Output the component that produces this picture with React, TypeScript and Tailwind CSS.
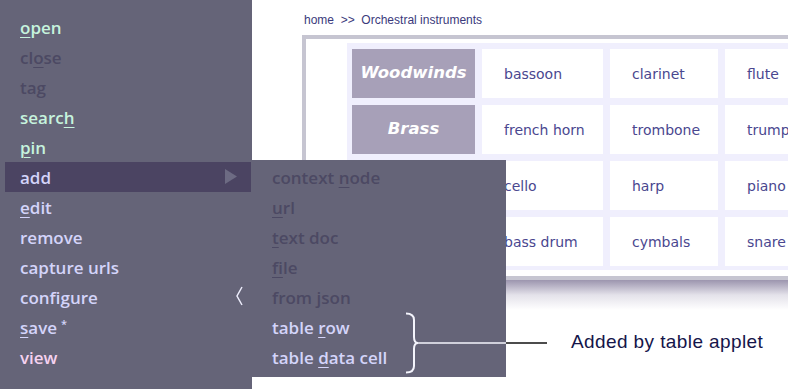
import React from "react";

type Item = { label: string; u?: number; color: string };

const MINT = "text-[#c6f3dd]";
const DIS = "text-[#4c4963]";
const LAV = "text-[#d4d4fa]";
const PINK = "text-[#f6d2f0]";

const mainItems: Item[] = [
  { label: "open", u: 0, color: MINT },
  { label: "close", u: 2, color: DIS },
  { label: "tag", color: DIS },
  { label: "search", u: 5, color: MINT },
  { label: "pin", u: 0, color: MINT },
  { label: "add", color: LAV },
  { label: "edit", u: 0, color: LAV },
  { label: "remove", color: LAV },
  { label: "capture urls", color: LAV },
  { label: "configure", color: LAV },
  { label: "save", u: 0, color: LAV },
  { label: "view", color: PINK },
];

const subItems: Item[] = [
  { label: "context node", u: 8, color: DIS },
  { label: "url", u: 0, color: DIS },
  { label: "text doc", u: 0, color: DIS },
  { label: "file", u: 0, color: DIS },
  { label: "from json", color: DIS },
  { label: "table row", u: 6, color: LAV },
  { label: "table data cell", u: 6, color: LAV },
];

function Label({ it }: { it: Item }) {
  if (it.u === undefined) return <>{it.label}</>;
  const a = it.label.slice(0, it.u);
  const b = it.label.slice(it.u, it.u + 1);
  const c = it.label.slice(it.u + 1);
  return (
    <>
      {a}
      <span className="underline underline-offset-[3px] decoration-1">{b}</span>
      {c}
    </>
  );
}

const menuFont = { fontFamily: "'Open Sans', Lato, sans-serif" };

function MainMenu() {
  return (
    <div
      className="absolute left-0 top-0 w-[252px] h-[389px] bg-[#656478] pt-[12px] flex flex-col text-[17px] font-semibold"
      style={menuFont}
    >
      {mainItems.map((it) => {
        const active = it.label === "add";
        return (
          <div
            key={it.label}
            className={`h-[30px] flex items-center relative ${active ? "bg-[#4b4462] ml-[5px] mr-[1px] pl-[15px]" : "pl-[20px]"} ${it.color}`}
          >
            <span className="leading-none">
              <Label it={it} />
              {it.label === "save" && <span className="text-[11px] align-[6px] ml-[4px]">*</span>}
            </span>
            {active && (
              <svg className="absolute left-[220px] top-[7px]" width="12" height="15" viewBox="0 0 12 15">
                <polygon points="0,0 12,7.5 0,15" fill="#6d6b83" />
              </svg>
            )}
            {it.label === "configure" && (
              <svg className="absolute left-[235px] top-[4px]" width="10" height="20" viewBox="0 0 10 20">
                <polyline points="7,1 2,10 7,19" fill="none" stroke="#ececfb" strokeWidth="1.5" />
              </svg>
            )}
          </div>
        );
      })}
    </div>
  );
}

function SubMenu() {
  return (
    <div
      className="absolute left-[252px] top-[160px] w-[254px] h-[217px] bg-[#656478] pt-[2px] flex flex-col text-[17px] font-semibold"
      style={menuFont}
    >
      {subItems.map((it) => (
        <div key={it.label} className={`h-[30px] flex items-center pl-[20px] ${it.color}`}>
          <span className="leading-none">
            <Label it={it} />
          </span>
        </div>
      ))}
    </div>
  );
}

const rows = [
  ["Woodwinds", "bassoon", "clarinet", "flute"],
  ["Brass", "french horn", "trombone", "trumpet"],
  ["Strings", "cello", "harp", "piano"],
  ["Percussion", "bass drum", "cymbals", "snare drum"],
];

function Content() {
  return (
    <div className="pl-[302px] pt-[13px] w-[900px]" style={{ fontFamily: "'DejaVu Sans', Verdana, sans-serif" }}>
      <div className="h-[15px] pl-[2px] text-[12px] leading-[15px] text-[#3b3a7c]" style={{ fontFamily: "'Liberation Sans', Arial, sans-serif" }}>
        home&nbsp;&nbsp;&gt;&gt;&nbsp; Orchestral instruments
      </div>
      <div className="mt-[7px] border-[4px] border-[#c6c5d1] bg-white pt-[4px] pb-[6px] pl-[41px]">
        <div className="bg-[#f0effd] pt-[6px] pb-[4px] px-[5px] flex flex-col gap-[7px]">
          {rows.map((r) => (
            <div key={r[0]} className="flex gap-[7px] h-[49px]">
              <div className="w-[123px] bg-[#a7a0b8] flex items-center justify-center text-white italic font-bold text-[16.5px]">
                {r[0]}
              </div>
              <div className="w-[121px] bg-white flex items-center pl-[22px] pt-[2px] text-[14px] text-[#4a478f]">{r[1]}</div>
              <div className="w-[108px] bg-white flex items-center pl-[22px] pt-[2px] text-[14px] text-[#4a478f]">{r[2]}</div>
              <div className="w-[121px] bg-white flex items-center pl-[22px] pt-[2px] text-[14px] text-[#4a478f]">{r[3]}</div>
            </div>
          ))}
        </div>
      </div>
      <div className="h-[30px] bg-gradient-to-b from-[#9c95ae] via-[#e4e2ea] to-white" />
    </div>
  );
}

export default function App() {
  return (
    <div className="relative w-[788px] h-[389px] overflow-hidden bg-white">
      <Content />
      <MainMenu />
      <SubMenu />
      <svg className="absolute left-0 top-0 pointer-events-none" width="788" height="389">
        <path
          d="M406,313.5 Q414,313.5 414,320 L414,337 Q414,343 418,343 Q414,343 414,349 L414,366 Q414,372.5 406,372.5"
          fill="none"
          stroke="#f4f4fc"
          strokeWidth="2"
        />
        <line x1="418" y1="343" x2="506" y2="343" stroke="#f4f4fc" strokeWidth="1.5" />
        <line x1="506" y1="343" x2="547" y2="343" stroke="#111" strokeWidth="1.5" />
      </svg>
      <div
        className="absolute left-[571px] top-[331px] text-[19px] tracking-[0.4px] leading-[22px] text-[#15154a]"
        style={{ fontFamily: "'Liberation Sans', Arial, sans-serif" }}
      >
        Added by table applet
      </div>
    </div>
  );
}
